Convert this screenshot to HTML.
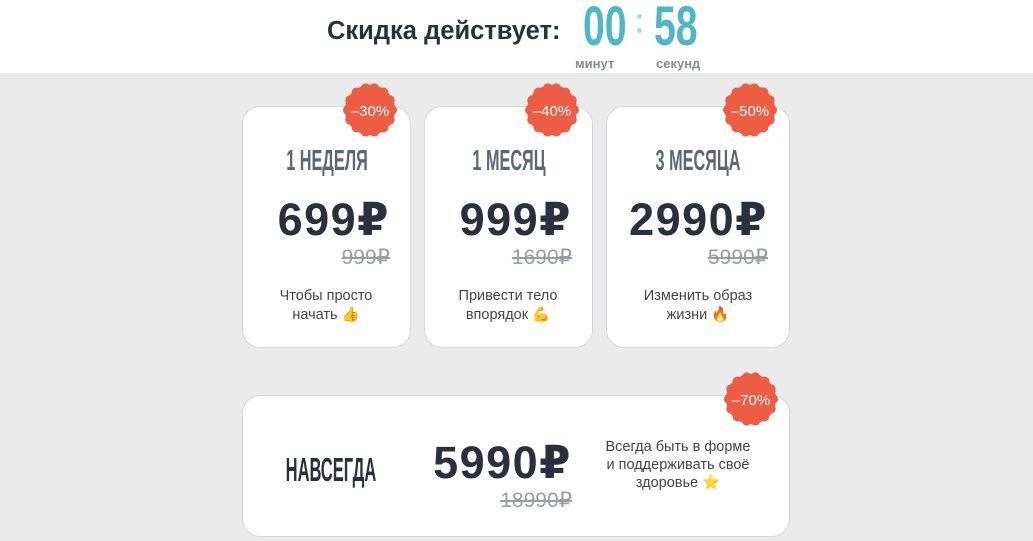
<!DOCTYPE html>
<html><head><meta charset="utf-8"><style>
*{margin:0;padding:0;box-sizing:border-box}
body{width:1033px;height:541px;overflow:hidden;background:#ebebeb;font-family:"Liberation Sans","DejaVu Sans",sans-serif;position:relative}
.top{position:absolute;left:0;top:0;width:1033px;height:73px;background:#fff}
.abs{position:absolute;white-space:nowrap}
.card{position:absolute;background:#fff;border:1px solid #d6d7dc;border-radius:18px}
.h{position:absolute;font-weight:bold;font-size:29px;color:#5f6673;transform:scaleX(.56);transform-origin:center;white-space:nowrap;text-align:center}
.p{position:absolute;font-weight:bold;font-size:45px;letter-spacing:1.5px;color:#2b2f3e;white-space:nowrap;text-align:right}
.o{position:absolute;font-size:21px;color:#9a9ca3;text-decoration:line-through;white-space:nowrap;text-align:right}
.d{position:absolute;font-size:14.5px;color:#444;line-height:19px;text-align:center;white-space:nowrap}
.b{position:absolute;width:60px;height:60px}
.b span{position:absolute;left:0;top:2px;width:60px;height:60px;line-height:60px;text-align:center;color:#fff;font-size:15px}
</style></head><body>
<div class="top"></div>
<div class="abs" style="left:327px;top:17px;font-size:25.5px;font-weight:bold;color:#2b2f3e">Скидка действует:</div>
<div class="abs" style="left:583px;top:-7px;font-size:56px;font-weight:bold;color:#4fb6c4;transform:scaleX(.7);transform-origin:left">00</div>
<div class="abs" style="left:654px;top:-7px;font-size:56px;font-weight:bold;color:#4fb6c4;transform:scaleX(.7);transform-origin:left">58</div>
<div class="abs" style="left:637px;top:14px;width:5px;height:5px;border-radius:50%;background:#a8dbe2"></div>
<div class="abs" style="left:637px;top:28px;width:5px;height:5px;border-radius:50%;background:#a8dbe2"></div>
<div class="abs" style="left:575px;top:56px;font-size:13px;font-weight:bold;color:#858a96">минут</div>
<div class="abs" style="left:656px;top:56px;font-size:13px;font-weight:bold;color:#858a96">секунд</div>

<div class="card" style="left:242px;top:106px;width:169px;height:242px"></div>
<div class="card" style="left:424px;top:106px;width:169px;height:242px"></div>
<div class="card" style="left:606px;top:106px;width:184px;height:242px"></div>
<div class="card" style="left:242px;top:395px;width:548px;height:142px"></div>

<div class="h" style="left:227px;top:145px;width:200px">1 НЕДЕЛЯ</div>
<div class="h" style="left:409px;top:145px;width:200px">1 МЕСЯЦ</div>
<div class="h" style="left:598px;top:145px;width:200px">3 МЕСЯЦА</div>
<div class="h" style="left:231px;top:451px;width:200px;color:#2b2f3e;font-size:33px;transform:scaleX(.5)">НАВСЕГДА</div>

<div class="p" style="left:230px;top:193px;width:160px">699₽</div>
<div class="p" style="left:412px;top:193px;width:160px">999₽</div>
<div class="p" style="left:608px;top:193px;width:160px">2990₽</div>
<div class="p" style="left:410px;top:436px;width:162px">5990₽</div>

<div class="o" style="left:290px;top:245px;width:100px">999₽</div>
<div class="o" style="left:472px;top:245px;width:100px">1690₽</div>
<div class="o" style="left:668px;top:245px;width:100px">5990₽</div>
<div class="o" style="left:452px;top:488px;width:120px">18990₽</div>

<div class="d" style="left:246px;top:287px;width:160px">Чтобы просто<br>начать 👍</div>
<div class="d" style="left:428px;top:287px;width:160px">Привести тело<br>впорядок 💪</div>
<div class="d" style="left:618px;top:287px;width:160px">Изменить образ<br>жизни 🔥</div>
<div class="d" style="left:588px;top:438px;width:180px;line-height:18px">Всегда быть в форме<br>и поддерживать своё<br>здоровье ⭐</div>

<svg width="0" height="0" style="position:absolute"><defs><g id="sc">
<circle cx="30" cy="30" r="25" fill="#ec5d43"/>
<g fill="#ec5d43">
<circle cx="52" cy="30" r="5"/><circle cx="49.7" cy="39.8" r="5"/><circle cx="43.4" cy="47.5" r="5"/><circle cx="34.3" cy="51.6" r="5"/><circle cx="25.7" cy="51.6" r="5"/><circle cx="16.6" cy="47.5" r="5"/><circle cx="10.3" cy="39.8" r="5"/><circle cx="8" cy="30" r="5"/><circle cx="10.3" cy="20.2" r="5"/><circle cx="16.6" cy="12.5" r="5"/><circle cx="25.7" cy="8.4" r="5"/><circle cx="34.3" cy="8.4" r="5"/><circle cx="43.4" cy="12.5" r="5"/><circle cx="49.7" cy="20.2" r="5"/>
</g></g></defs></svg>
<div class="b" style="left:340px;top:80px"><svg width="60" height="60"><use href="#sc"/></svg><span>–30%</span></div>
<div class="b" style="left:522px;top:80px"><svg width="60" height="60"><use href="#sc"/></svg><span>–40%</span></div>
<div class="b" style="left:720px;top:80px"><svg width="60" height="60"><use href="#sc"/></svg><span>–50%</span></div>
<div class="b" style="left:721px;top:369px"><svg width="60" height="60"><use href="#sc"/></svg><span>–70%</span></div>
</body></html>
